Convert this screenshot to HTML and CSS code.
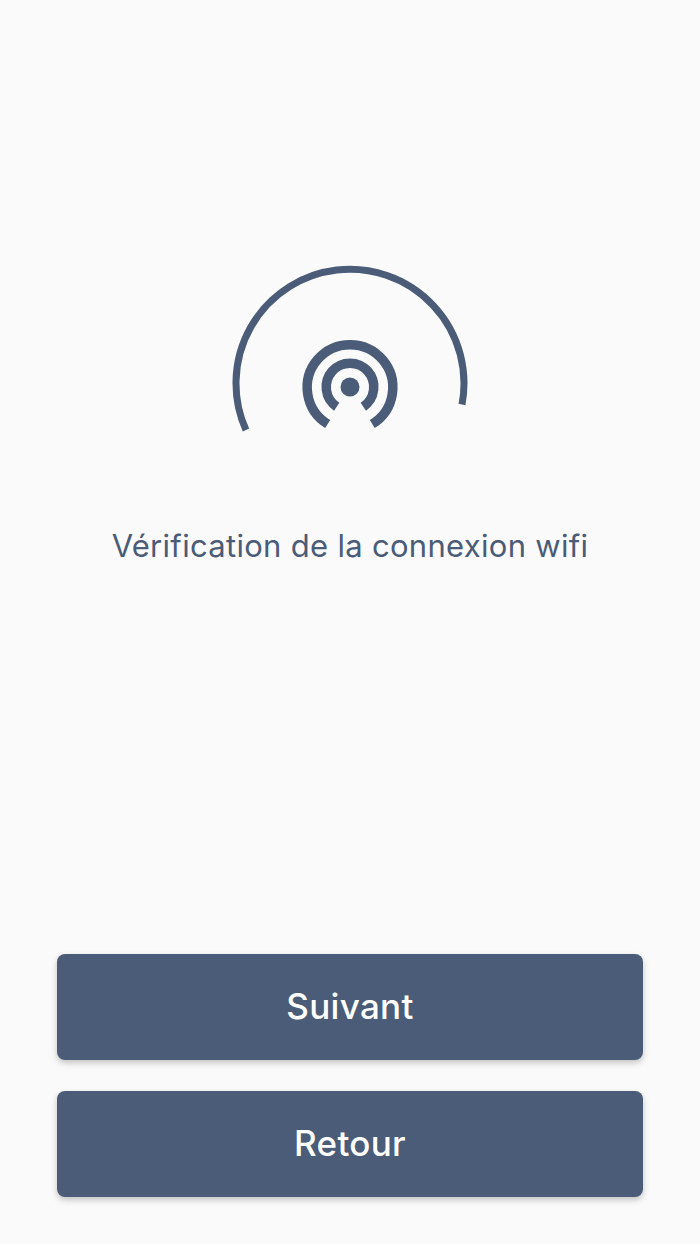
FILE: index.html
```html
<!DOCTYPE html>
<html lang="fr">
<head>
    <meta charset="UTF-8">
    <meta name="viewport" content="width=device-width, initial-scale=1.0">
    <title>Vérification de la connexion wifi</title>
    <link rel="stylesheet" href="styles.css">
</head>
<body>
    <div class="screen">
        <div class="status">
            <svg class="wifi-icon" width="240" height="176" viewBox="230 262 240 176" fill="none" stroke="currentColor">
                <path class="arc-big" d="M246 430A114 114 0 1 1 462 404.5"/>
                <path class="arc-ring" d="M327.7 424A42.8 42.8 0 1 1 372.3 424"/>
                <path class="arc-ring" d="M336.7 406.7A23.8 23.8 0 1 1 363.3 406.7"/>
                <circle class="dot" cx="350" cy="387" r="9.5"/>
            </svg>
            <p class="status-text">Vérification de la connexion wifi</p>
        </div>
        <div class="actions">
            <button type="button" class="btn">Suivant</button>
            <button type="button" class="btn">Retour</button>
        </div>
    </div>
</body>
</html>
```

FILE: styles.css
```css
* {
    margin: 0;
    padding: 0;
    box-sizing: border-box;
}

body {
    font-family: Inter, "Liberation Sans", sans-serif;
    background: #fafafb;
    color: #4a5c77;
}

.screen {
    height: 1244px;
    display: flex;
    flex-direction: column;
    justify-content: space-between;
    padding: 262px 57px 47px;
}

.status {
    display: flex;
    flex-direction: column;
    align-items: center;
}

.wifi-icon {
    display: block;
}

.arc-big {
    stroke-width: 7;
}

.arc-ring {
    stroke-width: 9.5;
}

.dot {
    fill: currentColor;
    stroke: none;
}

.status-text {
    margin-top: 88px;
    font-size: 31px;
    line-height: 40px;
    letter-spacing: 0.3px;
    white-space: nowrap;
}

.actions {
    display: flex;
    flex-direction: column;
    gap: 31px;
}

.btn {
    height: 106px;
    padding-bottom: 2px;
    border: none;
    border-radius: 8px;
    background: #4a5c77;
    color: #fff;
    font-family: inherit;
    font-size: 35px;
    font-weight: 500;
    letter-spacing: 0.3px;
    box-shadow: 0 3px 6px rgba(0, 0, 0, 0.22);
}
```
